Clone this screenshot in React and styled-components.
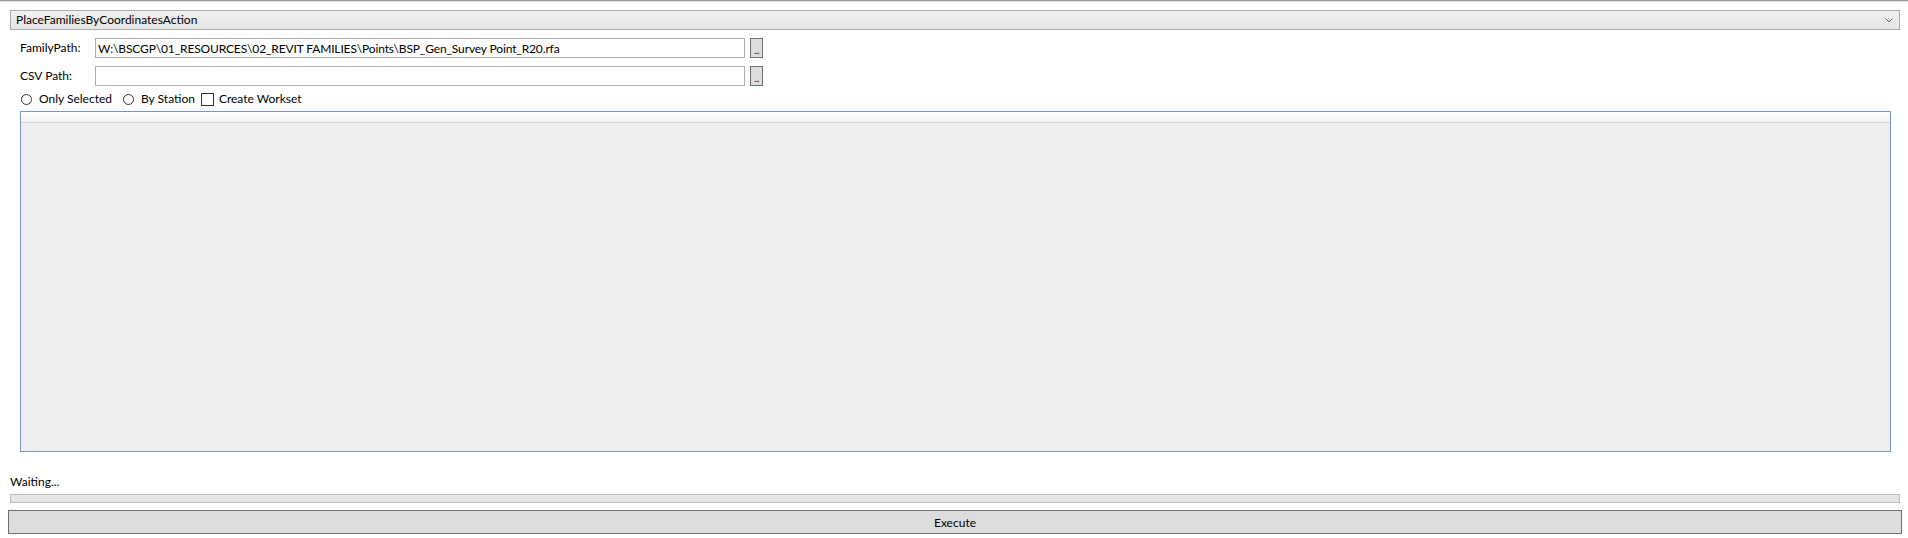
import React from "react";
import styled, { createGlobalStyle } from "styled-components";

const Global = createGlobalStyle`
  html, body { margin: 0; padding: 0; background: #ffffff; }
  body { font-family: "Segoe UI", Lato, "Open Sans", sans-serif; font-size: 12px; color: #000; }
  * { box-sizing: border-box; }
`;

const Window = styled.div`
  width: 1908px;
  height: 538px;
  border-top: 1px solid #9a9a9a;
  box-shadow: inset 0 1px 0 #e2e2e2;
  display: flex;
  flex-direction: column;
  overflow: hidden;
`;

const Combo = styled.div`
  margin: 9px 8px 0 10px;
  height: 20px;
  border: 1px solid #acacac;
  background: linear-gradient(#f0f0f0, #e5e5e5);
  display: flex;
  align-items: center;
  justify-content: space-between;
  padding: 0 6px 0 5px;
  line-height: 16px;
`;

const Form = styled.div`
  margin: 8px 0 0 20px;
  display: flex;
  flex-direction: column;
  gap: 8px;
`;

const Row = styled.div`
  display: grid;
  grid-template-columns: 70px 650px 13px;
  column-gap: 5px;
  align-items: center;
  height: 20px;
`;

const Label = styled.span`
  line-height: 16px;
`;

const TextBox = styled.div`
  height: 20px;
  border: 1px solid #abadb3;
  background: #fff;
  padding: 0 2px;
  display: flex;
  align-items: center;
  white-space: nowrap;
  overflow: hidden;
  letter-spacing: -0.14px;
`;

const Browse = styled.div`
  height: 20px;
  border: 1px solid #707070;
  background: #dddddd;
  font-size: 9px;
  line-height: 20px;
  text-align: center;
  letter-spacing: -0.5px;
  color: #222;
  padding-top: 2px;
`;

const Options = styled.div`
  margin: 6px 0 0 20px;
  display: flex;
  align-items: center;
  height: 14px;
`;

const Option = styled.label`
  display: flex;
  align-items: center;
  gap: ${(p) => p.$inner}px;
  margin-right: ${(p) => p.$gap}px;
  line-height: 14px;
`;

const Radio = styled.span`
  width: 11px;
  height: 11px;
  border-radius: 50%;
  border: 1px solid #333;
  background: #fff;
  margin-left: 1px;
`;

const Check = styled.span`
  width: 13px;
  height: 13px;
  border: 1px solid #333;
  background: #fff;
`;

const Panel = styled.div`
  margin: 5px 17px 0 20px;
  height: 341px;
  border: 1px solid #7a96bd;
  background: #efefef;
  display: flex;
  flex-direction: column;
`;

const PanelHeader = styled.div`
  height: 11px;
  background: linear-gradient(#ffffff, #f3f3f3);
  border-bottom: 1px solid #d5d5d5;
`;

const Status = styled.div`
  margin: 22px 0 0 10px;
  line-height: 16px;
  height: 16px;
`;

const Progress = styled.div`
  margin: 4px 8px 0 10px;
  height: 9px;
  border: 1px solid #bcbcbc;
  background: #e6e6e6;
`;

const Execute = styled.div`
  margin: 7px 6px 0 8px;
  height: 24px;
  border: 1px solid #707070;
  background: #dddddd;
  display: flex;
  align-items: center;
  justify-content: center;
`;

const Chevron = () => (
  <svg width="8" height="5" viewBox="0 0 8 5">
    <path d="M0.5 0.5 L4 4 L7.5 0.5" fill="none" stroke="#606060" strokeWidth="1" />
  </svg>
);

export default function App() {
  return (
    <>
      <Global />
      <Window>
        <Combo>
          <span>PlaceFamiliesByCoordinatesAction</span>
          <Chevron />
        </Combo>
        <Form>
          <Row>
            <Label>FamilyPath:</Label>
            <TextBox>W:\BSCGP\01_RESOURCES\02_REVIT FAMILIES\Points\BSP_Gen_Survey Point_R20.rfa</TextBox>
            <Browse>...</Browse>
          </Row>
          <Row>
            <Label>CSV Path:</Label>
            <TextBox />
            <Browse>...</Browse>
          </Row>
        </Form>
        <Options>
          <Option $gap={10} $inner={7}>
            <Radio />
            Only Selected
          </Option>
          <Option $gap={6} $inner={7}>
            <Radio />
            By Station
          </Option>
          <Option $gap={0} $inner={5}>
            <Check />
            Create Workset
          </Option>
        </Options>
        <Panel>
          <PanelHeader />
        </Panel>
        <Status>Waiting...</Status>
        <Progress />
        <Execute>Execute</Execute>
      </Window>
    </>
  );
}
